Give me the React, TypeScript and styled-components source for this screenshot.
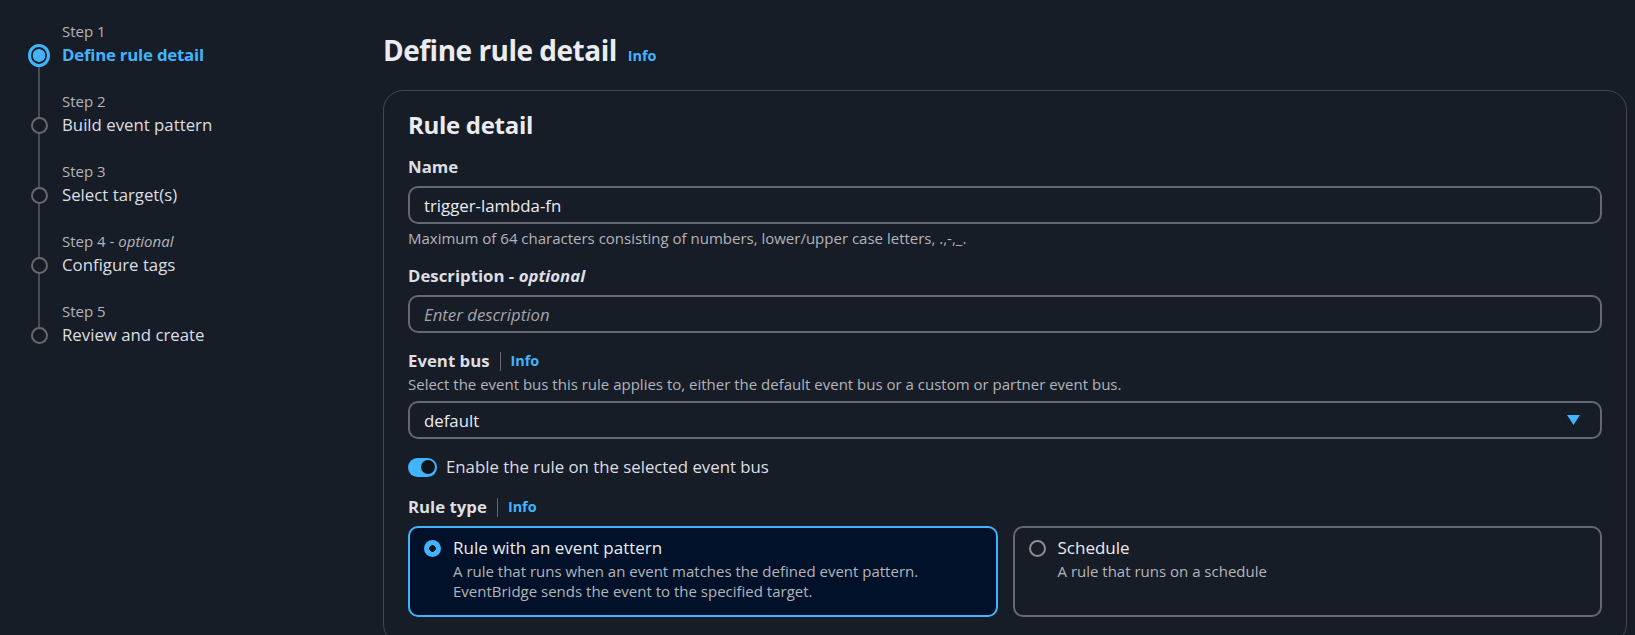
import React from 'react';
import styled, { createGlobalStyle } from 'styled-components';

const COLORS = {
  BG: '#161d26',
  TEXT: '#dedee3',
  HEADING: '#ebebf0',
  SECONDARY: '#b4b4bb',
  PLACEHOLDER: '#a4a4ad',
  BLUE: '#42b4ff',
  INPUT_BORDER: '#656871',
  PANEL_BORDER: '#424650',
  STEP_LINE: '#464c58',
  SELECTED_BG: '#001129',
  KNOB: '#0f141a',
};

const SMALL = '15px';
const BODY = '16.8px';

const GlobalStyle = createGlobalStyle`
  html, body {
    margin: 0;
    padding: 0;
    overflow: hidden;
    background: ${COLORS.BG};
    color: ${COLORS.TEXT};
    font-family: "Open Sans", "Noto Sans", sans-serif;
  }
  * {
    box-sizing: border-box;
  }
`;

const Page = styled.div`
  display: grid;
  grid-template-columns: 355px minmax(0, 1fr);
  padding: 20px 8px 0 28px;
  min-height: 100vh;
`;

/* ---------- wizard navigation ---------- */

const StepList = styled.ol`
  list-style: none;
  margin: 0;
  padding: 0;
`;

const StepItem = styled.li`
  display: grid;
  grid-template-columns: 22px 1fr;
  column-gap: 12px;
`;

// circle centre sits 35px below the top of each step
const Marker = styled.div<{ $first?: boolean; $last?: boolean }>`
  padding-top: 22px;
  background-image: linear-gradient(${COLORS.STEP_LINE}, ${COLORS.STEP_LINE});
  background-repeat: no-repeat;
  background-position: ${({ $first }) => ($first ? 'center 35px' : 'center top')};
  background-size: ${({ $first, $last }) =>
    $first ? '2px calc(100% - 35px)' : $last ? '2px 35px' : '2px 100%'};
`;

const CircleSlot = styled.div`
  height: 26px;
  display: flex;
  align-items: center;
  justify-content: center;
`;

const StepCircle = styled.span<{ $active?: boolean }>`
  display: block;
  border-radius: 50%;
  ${({ $active }) =>
    $active
      ? `
    width: 23px;
    height: 23px;
    border: 3px solid ${COLORS.BLUE};
    background: radial-gradient(circle, ${COLORS.BLUE} 0 6px, ${COLORS.BG} 6.6px);
  `
      : `
    width: 17px;
    height: 17px;
    border: 2px solid ${COLORS.INPUT_BORDER};
    background: ${COLORS.BG};
  `}
`;

const StepText = styled.div`
  padding-bottom: 22px;
`;

const StepLabel = styled.div`
  font-size: ${SMALL};
  line-height: 22px;
  color: ${COLORS.SECONDARY};

  & em {
    font-style: italic;
  }
`;

const StepTitle = styled.div<{ $active?: boolean }>`
  font-size: ${BODY};
  line-height: 26px;
  font-weight: ${({ $active }) => ($active ? 700 : 400)};
  letter-spacing: ${({ $active }) => ($active ? '-0.2px' : '0')};
  color: ${({ $active }) => ($active ? COLORS.BLUE : COLORS.TEXT)};
`;

/* ---------- main content ---------- */

const Main = styled.main`
  padding-top: 12px;
  min-width: 0;
`;

const PageHeader = styled.div`
  display: flex;
  align-items: baseline;
  gap: 11px;
  margin-bottom: 22px;
`;

const H1 = styled.h1`
  margin: 0;
  font-size: 28px;
  line-height: 36px;
  font-weight: 700;
  letter-spacing: -0.5px;
  color: ${COLORS.HEADING};
`;

const InfoLink = styled.a`
  color: ${COLORS.BLUE};
  font-size: 14.4px;
  font-weight: 700;
  text-decoration: none;
  cursor: pointer;
`;

const Panel = styled.section`
  border: 1px solid ${COLORS.PANEL_BORDER};
  border-radius: 20px;
  padding: 19px 24px 26px;
`;

const H2 = styled.h2`
  margin: 0 0 16px;
  font-size: 24px;
  line-height: 29px;
  font-weight: 700;
  letter-spacing: -0.3px;
  color: ${COLORS.HEADING};
`;

const Form = styled.div`
  display: flex;
  flex-direction: column;
  gap: 16px;
`;

const Field = styled.div`
  display: flex;
  flex-direction: column;
`;

const LabelRow = styled.div`
  display: flex;
  align-items: center;
  font-size: ${BODY};
  line-height: 24px;
  font-weight: 700;
  color: ${COLORS.TEXT};

  & em {
    font-style: italic;
  }
`;

const Divider = styled.span`
  width: 1px;
  height: 19px;
  margin: 0 10px;
  background: ${COLORS.INPUT_BORDER};
`;

const FieldDescription = styled.div`
  margin-top: 2px;
  font-size: ${SMALL};
  line-height: 19px;
  color: ${COLORS.SECONDARY};
`;

const Help = styled.div`
  margin-top: 5px;
  font-size: ${SMALL};
  line-height: 19px;
  color: ${COLORS.SECONDARY};
`;

const TextInput = styled.input`
  display: block;
  width: 100%;
  height: 38px;
  margin-top: 7px;
  padding: 0 14px;
  border: 2px solid ${COLORS.INPUT_BORDER};
  border-radius: 10px;
  background: transparent;
  color: ${COLORS.HEADING};
  font-family: inherit;
  font-size: ${BODY};
  outline: none;

  &::placeholder {
    color: ${COLORS.PLACEHOLDER};
    font-style: italic;
  }
`;

const SelectBox = styled.div`
  display: flex;
  align-items: center;
  justify-content: space-between;
  height: 38px;
  margin-top: 7px;
  padding: 0 20px 0 14px;
  border: 2px solid ${COLORS.INPUT_BORDER};
  border-radius: 10px;
  font-size: ${BODY};
  color: ${COLORS.HEADING};
  cursor: pointer;
`;

const ToggleRow = styled.label`
  display: flex;
  align-items: center;
  gap: 9px;
  font-size: ${BODY};
  line-height: 24px;
  color: ${COLORS.TEXT};
`;

const ToggleTrack = styled.span<{ $on?: boolean }>`
  display: flex;
  justify-content: ${({ $on }) => ($on ? 'flex-end' : 'flex-start')};
  align-items: center;
  width: 29px;
  height: 19px;
  padding: 0 2.5px;
  border-radius: 10px;
  background: ${({ $on }) => ($on ? COLORS.BLUE : COLORS.INPUT_BORDER)};
`;

const ToggleKnob = styled.span`
  width: 14px;
  height: 14px;
  border-radius: 50%;
  background: ${COLORS.KNOB};
`;

const TileGrid = styled.div`
  display: grid;
  grid-template-columns: 1fr 1fr;
  gap: 15px;
  margin-top: 7px;
`;

const Tile = styled.div<{ $selected?: boolean }>`
  display: flex;
  align-items: flex-start;
  gap: 12px;
  padding: 8px 14px 14px;
  border: 2px solid ${({ $selected }) => ($selected ? COLORS.BLUE : COLORS.INPUT_BORDER)};
  border-radius: 10px;
  background: ${({ $selected }) => ($selected ? COLORS.SELECTED_BG : 'transparent')};
  cursor: pointer;
`;

const Radio = styled.span<{ $checked?: boolean }>`
  flex: none;
  width: 17px;
  height: 17px;
  margin-top: 3.5px;
  border-radius: 50%;
  ${({ $checked }) =>
    $checked
      ? `background: radial-gradient(circle, ${COLORS.KNOB} 0 3px, ${COLORS.BLUE} 3.6px);`
      : `border: 2px solid #8c8c94;`}
`;

const TileTitle = styled.div`
  font-size: 17px;
  line-height: 24px;
  color: ${COLORS.HEADING};
`;

const TileDescription = styled.div`
  margin-top: 1px;
  font-size: ${SMALL};
  line-height: 20px;
  color: ${COLORS.SECONDARY};
`;

const steps = [
  { label: 'Step 1', title: 'Define rule detail' },
  { label: 'Step 2', title: 'Build event pattern' },
  { label: 'Step 3', title: 'Select target(s)' },
  { label: 'Step 4', optional: true, title: 'Configure tags' },
  { label: 'Step 5', title: 'Review and create' },
];

function CaretDown() {
  return (
    <svg width="13" height="10" viewBox="0 0 13 10" aria-hidden="true">
      <path d="M0 0 H13 L6.5 10 Z" fill={COLORS.BLUE} />
    </svg>
  );
}

function App() {
  const activeStep = 0;

  return (
    <>
      <GlobalStyle />
      <Page>
        <nav>
          <StepList>
            {steps.map((step, i) => (
              <StepItem key={step.label}>
                <Marker $first={i === 0} $last={i === steps.length - 1}>
                  <CircleSlot>
                    <StepCircle $active={i === activeStep} />
                  </CircleSlot>
                </Marker>
                <StepText>
                  <StepLabel>
                    {step.label}
                    {step.optional && (
                      <>
                        {' - '}
                        <em>optional</em>
                      </>
                    )}
                  </StepLabel>
                  <StepTitle $active={i === activeStep}>{step.title}</StepTitle>
                </StepText>
              </StepItem>
            ))}
          </StepList>
        </nav>

        <Main>
          <PageHeader>
            <H1>Define rule detail</H1>
            <InfoLink>Info</InfoLink>
          </PageHeader>

          <Panel>
            <H2>Rule detail</H2>
            <Form>
              <Field>
                <LabelRow>Name</LabelRow>
                <TextInput defaultValue="trigger-lambda-fn" />
                <Help>
                  Maximum of 64 characters consisting of numbers, lower/upper case letters, .,-,_.
                </Help>
              </Field>

              <Field>
                <LabelRow>
                  Description -&nbsp;<em>optional</em>
                </LabelRow>
                <TextInput placeholder="Enter description" />
              </Field>

              <Field>
                <LabelRow>
                  Event bus
                  <Divider />
                  <InfoLink>Info</InfoLink>
                </LabelRow>
                <FieldDescription>
                  Select the event bus this rule applies to, either the default event bus or a custom
                  or partner event bus.
                </FieldDescription>
                <SelectBox role="button">
                  <span>default</span>
                  <CaretDown />
                </SelectBox>
              </Field>

              <ToggleRow>
                <ToggleTrack $on>
                  <ToggleKnob />
                </ToggleTrack>
                Enable the rule on the selected event bus
              </ToggleRow>

              <Field>
                <LabelRow>
                  Rule type
                  <Divider />
                  <InfoLink>Info</InfoLink>
                </LabelRow>
                <TileGrid>
                  <Tile $selected>
                    <Radio $checked />
                    <div>
                      <TileTitle>Rule with an event pattern</TileTitle>
                      <TileDescription>
                        A rule that runs when an event matches the defined event pattern.
                        <br />
                        EventBridge sends the event to the specified target.
                      </TileDescription>
                    </div>
                  </Tile>
                  <Tile>
                    <Radio />
                    <div>
                      <TileTitle>Schedule</TileTitle>
                      <TileDescription>A rule that runs on a schedule</TileDescription>
                    </div>
                  </Tile>
                </TileGrid>
              </Field>
            </Form>
          </Panel>
        </Main>
      </Page>
    </>
  );
}

export default App;
